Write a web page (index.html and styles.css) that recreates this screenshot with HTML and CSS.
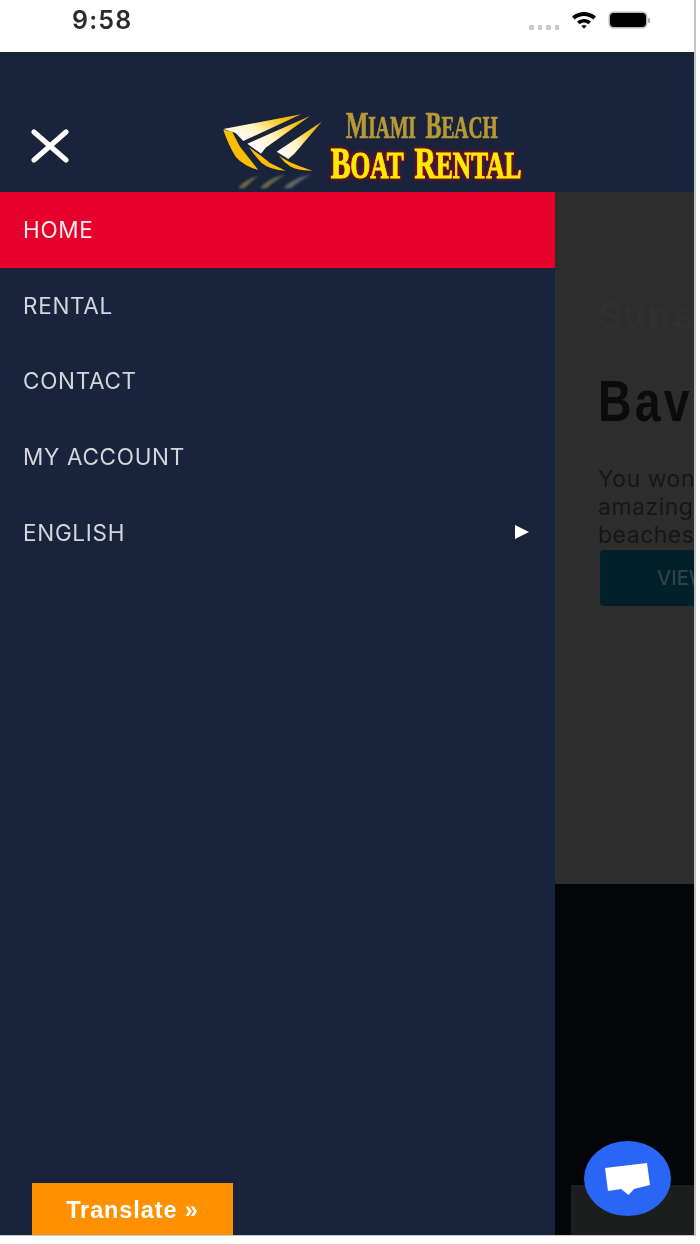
FILE: index.html
```html
<!DOCTYPE html>
<html lang="en">
<head>
<meta charset="utf-8">
<title>Miami Beach Boat Rental</title>
<link rel="stylesheet" href="styles.css">
</head>
<body>
<div class="screen">
  <div class="status">
    <span class="time">9:58</span>
    <div class="status-icons">
      <span class="signal"><i></i><i></i><i></i><i></i></span>
      <svg class="wifi" viewBox="0 0 26 19" width="26" height="19">
        <path d="M1 6.500C8 .5 18 .5 25 6.500L22.300 9.500C16.800 4.800 9.200 4.800 3.700 9.500Z" fill="#000"/>
        <path d="M6 11.500C10.300 8 15.700 8 20 11.500L17.400 14.300C14.500 12 11.500 12 8.600 14.300Z" fill="#000"/>
        <path d="M10.300 15.800C12 14.600 14 14.600 15.700 15.800L13 18.800Z" fill="#000"/>
      </svg>
      <span class="battery"><span class="battery-fill"></span><span class="battery-cap"></span></span>
    </div>
  </div>
  <div class="header">
    <svg class="close" viewBox="0 0 38 34" width="38" height="34">
      <path d="M3 3L35 31M35 3L3 31" stroke="#fff" stroke-width="5" stroke-linecap="round" fill="none"/>
    </svg>
    <svg class="logo" viewBox="0 0 1020 276" width="340" height="92">
      <defs>
        <linearGradient id="arm" x1="0" y1=".7" x2="1" y2=".2">
          <stop offset="0" stop-color="#fff"/>
          <stop offset=".4" stop-color="#fff3c0"/>
          <stop offset=".8" stop-color="#f8c310"/>
          <stop offset="1" stop-color="#f0b000"/>
        </linearGradient>
      </defs>
      <g class="chevrons" transform="translate(45 15)">
        <path d="M258 28L25 72L62 84L85 108Z" fill="url(#arm)"/>
        <path d="M25 75L50 78L75 125L130 195Q85 182 62 155Q40 120 25 75Z" fill="#fdbd00"/>
        <path d="M285 33L97 116L138 146L152 128Z" fill="url(#arm)"/>
        <path d="M102 127L135 150L165 174L212 197Q165 195 140 174Q118 152 102 127Z" fill="#fdbd00"/>
        <path d="M320 50L185 140L220 162L238 146Z" fill="url(#arm)"/>
        <path d="M192 152L222 170L250 182L292 197Q250 198 225 184Q207 172 192 152Z" fill="#fdbd00"/>
      </g>
      <g class="reflection" transform="translate(45 15)">
        <path d="M70 250Q85 225 130 212Q105 232 88 250Z" fill="#6d6a45"/>
        <path d="M135 250Q155 222 212 208Q175 230 155 250Z" fill="#6d6a45"/>
        <path d="M205 250Q230 220 290 208Q250 230 228 250Z" fill="#5f6468"/>
      </g>
      <text class="logo-top" x="437" y="113" textLength="456" lengthAdjust="spacingAndGlyphs"><tspan class="cap">M</tspan>IAMI <tspan class="cap">B</tspan>EACH</text>
      <text class="logo-main" x="392" y="233" textLength="572" lengthAdjust="spacingAndGlyphs"><tspan class="cap">B</tspan>OAT <tspan class="cap">R</tspan>ENTAL</text>
    </svg>
  </div>
  <div class="body">
    <nav class="drawer">
      <a class="item active">HOME</a>
      <a class="item">RENTAL</a>
      <a class="item">CONTACT</a>
      <a class="item">MY ACCOUNT</a>
      <a class="item">ENGLISH<svg class="arrow" viewBox="0 0 14 14" width="14" height="14"><path d="M0 0L14 7L0 14Z" fill="#fff"/></svg></a>
    </nav>
    <div class="backdrop">
      <div class="hero">
        <div class="hero-mark">Sunset</div>
        <h2 class="hero-title">Bavaro</h2>
        <p class="hero-text">You wonder<br>amazing<br>beaches</p>
        <div class="hero-btn">VIEW</div>
      </div>
      <div class="foot"><div class="foot-box"></div></div>
    </div>
  </div>
  <div class="translate">Translate »</div>
  <div class="chat">
    <svg viewBox="0 0 87 75" width="87" height="75">
      <path d="M21 27L63 22L66 44L50 48L44.500 54L37 48L24 50Z" fill="#fff"/>
    </svg>
  </div>
</div>
</body>
</html>
```
FILE: styles.css
```css
* { box-sizing: border-box; }
html, body { margin: 0; padding: 0; background: #fff; }
body { width: 700px; height: 1244px; overflow: hidden; font-family: Inter, "Liberation Sans", sans-serif; }

.screen {
  position: relative;
  width: 696px;
  height: 1236px;
  display: flex;
  flex-direction: column;
  border-right: 2px solid #c4c4c4;
  border-bottom: 1px solid #c8c8c8;
  filter: blur(.6px);
}

.status {
  height: 52px;
  background: #fff;
  display: flex;
  justify-content: space-between;
  padding: 6px 46px 0 72px;
}
.time { font-family: Inter, sans-serif; font-size: 25px; line-height: 28px; font-weight: 600; letter-spacing: 1.200px; color: #2b2b2b; }
.status-icons { display: flex; align-items: flex-start; height: 30px; }
.signal { display: flex; gap: 4px; margin-top: 19px; margin-right: 12px; }
.signal i { width: 4.500px; height: 5px; background: #c9c9c9; border-radius: 1px; }
.wifi { margin-top: 4px; margin-right: 13px; }
.battery { position: relative; width: 38px; height: 14px; margin-top: 7px; display: block; }
.battery-fill { display: block; width: 36px; height: 14px; background: #000; border-radius: 4px; box-shadow: 0 0 0 1.500px #b5b5b5; }
.battery-cap { position: absolute; right: -2px; top: 5px; width: 2px; height: 5px; background: #aaa; border-radius: 1px; }

.header {
  height: 140px;
  background: #19243c;
  display: flex;
  align-items: flex-end;
  padding-left: 31px;
}
.close { margin-bottom: 29px; margin-right: 131px; flex: none; }
.logo { flex: none; display: block; }
.logo-top, .logo-main { font-family: "Liberation Serif", serif; font-weight: 700; word-spacing: 22px; }
.logo-top { font-size: 92px; fill: #b89a35; stroke: #b89a35; stroke-width: 2px; }
.logo-top .cap { font-size: 113px; }
.logo-main { font-size: 112px; fill: #f6ee00; stroke: #f6ee00; stroke-width: 3px; filter: drop-shadow(0 0 4px #a00018) drop-shadow(0 0 5px #a00018); }
.logo-main .cap { font-size: 132px; }
.chevrons { filter: blur(1.200px); }
.reflection { filter: blur(2.500px); }

.body { flex: 1; display: flex; min-height: 0; }

.drawer { width: 555px; flex: none; background: #19243c; display: flex; flex-direction: column; }
.item {
  height: 75.700px;
  display: flex;
  align-items: center;
  justify-content: space-between;
  padding: 0 26px 1px 23px;
  font-size: 22.500px;
  letter-spacing: .7px;
  color: #d3d6da;
}
.item.active { background: #e6002c; color: #fdeef0; }
.arrow { display: block; }

.backdrop { flex: 1; min-width: 0; display: flex; flex-direction: column; overflow: hidden; }
.hero { height: 692px; background: #2c2d2c; padding: 103px 0 0 43px; white-space: nowrap; }
.hero-mark { font-size: 36px; line-height: 40px; font-weight: 700; color: #2f302f; letter-spacing: 2px; }
.hero-title { margin: 33px 0 0; font-family: "Liberation Sans", sans-serif; font-size: 58px; line-height: 66px; font-weight: 700; letter-spacing: 4px; color: #0b0b0c; transform-origin: left; transform: scaleX(.8); }
.hero-text { margin: 31px 0 0; font-size: 23px; line-height: 28px; letter-spacing: .5px; color: #151616; }
.hero-btn { margin: 1px 0 0 2px; width: 200px; height: 56px; background: #02202a; border-radius: 4px; padding-left: 57px; font-size: 20px; line-height: 56px; font-weight: 500; color: #2f4248; }
.foot { flex: 1; background: #040508; display: flex; align-items: flex-end; padding-left: 16px; }
.foot-box { flex: 1; height: 50px; background: #1c1e1e; }

.translate {
  position: absolute;
  left: 32px;
  bottom: 0;
  width: 201px;
  height: 52px;
  padding-top: 3px;
  background: #ff9000;
  color: #fff;
  font-family: "Liberation Sans", sans-serif;
  font-size: 23.500px;
  font-weight: 700;
  letter-spacing: .9px;
  display: flex;
  align-items: center;
  justify-content: center;
}
.chat {
  position: absolute;
  left: 584px;
  top: 1141px;
  width: 87px;
  height: 75px;
  border-radius: 50%;
  background: #2a66f5;
}
.chat svg { display: block; }
```
